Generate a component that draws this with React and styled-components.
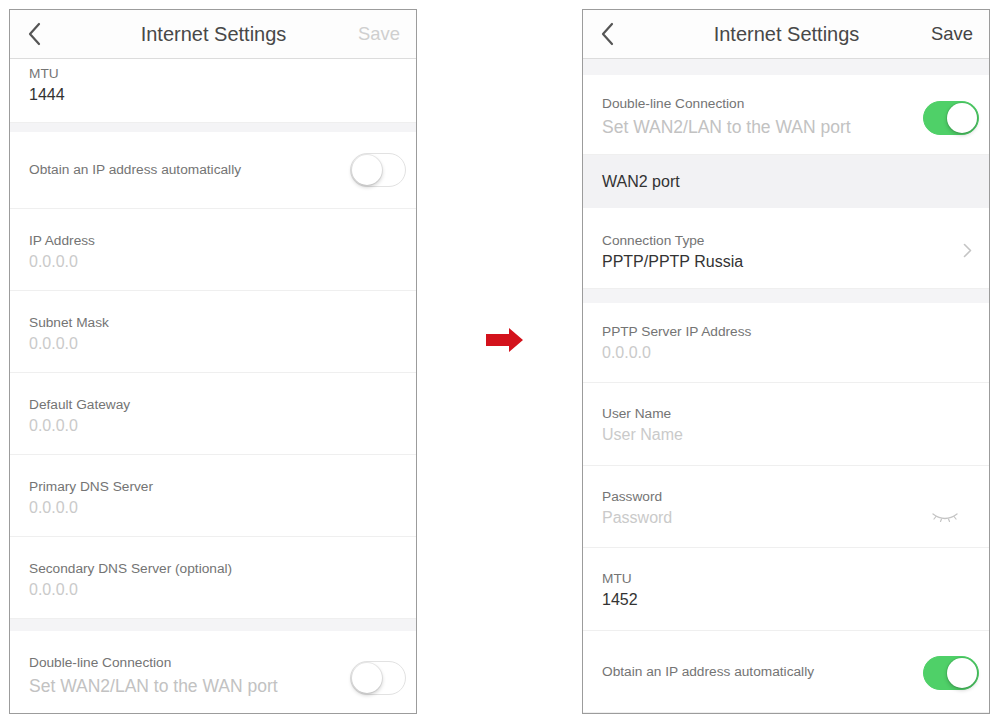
import styled, { createGlobalStyle } from "styled-components"

const GlobalStyle = createGlobalStyle`
body{
margin:0;
background:#fff;
font-family:"Liberation Sans", Arial, sans-serif;
}
`

const Page = styled.div`
display:flex;
align-items:flex-start;
padding:9px 0 0 9px;
`
const Phone = styled.div`
width:408px;
height:705px;
box-sizing:border-box;
border:1px solid #9c9c9c;
overflow:hidden;
background:#fff;
display:flex;
flex-direction:column;
`
const Header = styled.div`
flex:none;
height:48px;
display:grid;
grid-template-columns:1fr auto 1fr;
align-items:center;
padding:0 16px 0 17px;
border-bottom:1px solid #dcdcdc;
background:#fdfdfd;
`
const Title = styled.div`
font-size:20px;
color:#484848;
`
const Save = styled.div`
justify-self:end;
font-size:18.4px;
color:${p => (p.$active ? "#444" : "#cfcfcf")};
`
const Back = styled.svg`
display:block;
`
const Row = styled.div`
flex:none;
height:${p => p.$h}px;
box-sizing:border-box;
padding:${p => p.$pad || 0}px ${p => p.$right || 17}px 0 19px;
border-bottom:1px solid #efefef;
display:flex;
align-items:${p => (p.$center ? "center" : "flex-start")};
justify-content:space-between;
`
const Field = styled.div`
display:flex;
flex-direction:column;
`
const Label = styled.div`
font-size:13.7px;
line-height:18px;
color:#747474;
`
const Value = styled.div`
font-size:16px;
line-height:24px;
color:${p => (p.$muted ? "#cacaca" : "#333")};
font-weight:${p => (p.$bold ? 500 : 400)};
`
const Sub = styled.div`
font-size:17.5px;
line-height:24px;
margin-top:2px;
color:#c2c2c2;
`
const Band = styled.div`
flex:none;
height:${p => p.$h}px;
background:#f4f4f6;
`
const Section = styled.div`
flex:none;
height:53px;
display:flex;
align-items:center;
padding-left:19px;
background:#f2f2f4;
font-size:16px;
color:#333;
`
const Aside = styled.div`
align-self:${p => p.$self || "center"};
margin:${p => p.$m || "0"};
display:flex;
`
const Track = styled.div`
flex:none;
width:56px;
height:34px;
border-radius:17px;
box-sizing:border-box;
padding:0 1px;
background:${p => (p.$on ? "#4fd068" : "#fff")};
border:1px solid ${p => (p.$on ? "#4fd068" : "#e2e2e2")};
display:flex;
align-items:center;
justify-content:${p => (p.$on ? "flex-end" : "flex-start")};
margin-top:${p => p.$dy || 0}px;
`
const Knob = styled.div`
width:30px;
height:30px;
border-radius:50%;
background:#fff;
box-shadow:0 2px 4px rgba(0,0,0,.22), 0 0 0 1px rgba(0,0,0,.07);
`
const Gap = styled.div`
flex:none;
width:165px;
box-sizing:border-box;
padding:319px 0 0 69px;
`

const Toggle = ({ on, dy }) => (
  <Track $on={on} $dy={dy}>
    <Knob />
  </Track>
)

const PhoneHeader = ({ active }) => (
  <Header>
    <Back width="14" height="24" viewBox="0 0 14 24">
      <path d="M12 2 L3 12 L12 22" fill="none" stroke="#555" strokeWidth="2.2" strokeLinecap="round" strokeLinejoin="round" />
    </Back>
    <Title>Internet Settings</Title>
    <Save $active={active}>Save</Save>
  </Header>
)

const Info = ({ label, value, muted, bold }) => (
  <Field>
    <Label>{label}</Label>
    <Value $muted={muted} $bold={bold}>{value}</Value>
  </Field>
)

const App = () => {
  return (
    <Page>
      <GlobalStyle />
      <Phone>
        <PhoneHeader />
        <Row $h={64} $pad={6}>
          <Info label="MTU" value="1444" />
        </Row>
        <Band $h={9} />
        <Row $h={77} $center $right={10}>
          <Label>Obtain an IP address automatically</Label>
          <Toggle />
        </Row>
        <Row $h={82} $pad={23}>
          <Info label="IP Address" value="0.0.0.0" muted />
        </Row>
        <Row $h={82} $pad={23}>
          <Info label="Subnet Mask" value="0.0.0.0" muted />
        </Row>
        <Row $h={82} $pad={23}>
          <Info label="Default Gateway" value="0.0.0.0" muted />
        </Row>
        <Row $h={82} $pad={23}>
          <Info label="Primary DNS Server" value="0.0.0.0" muted />
        </Row>
        <Row $h={82} $pad={23}>
          <Info label="Secondary DNS Server (optional)" value="0.0.0.0" muted />
        </Row>
        <Band $h={12} />
        <Row $h={94} $pad={23} $right={10}>
          <Field>
            <Label>Double-line Connection</Label>
            <Sub>Set WAN2/LAN to the WAN port</Sub>
          </Field>
          <Toggle dy={7} />
        </Row>
      </Phone>

      <Gap>
        <svg width="37" height="24" viewBox="0 0 37 24">
          <path d="M0 6 H23 V0 L37 12 L23 24 V18 H0 Z" fill="#d3121c" />
        </svg>
      </Gap>

      <Phone>
        <PhoneHeader active />
        <Band $h={16} />
        <Row $h={80} $pad={20} $right={10}>
          <Field>
            <Label>Double-line Connection</Label>
            <Sub>Set WAN2/LAN to the WAN port</Sub>
          </Field>
          <Toggle on dy={6} />
        </Row>
        <Section>WAN2 port</Section>
        <Row $h={81} $pad={24}>
          <Info label="Connection Type" value="PPTP/PPTP Russia" bold />
          <Aside $self="flex-start" $m="11px 0 0 0">
            <svg width="9" height="15" viewBox="0 0 9 15">
              <path d="M1.5 1.5 L7.5 7.5 L1.5 13.5" fill="none" stroke="#c4c4c4" strokeWidth="1.6" strokeLinecap="round" strokeLinejoin="round" />
            </svg>
          </Aside>
        </Row>
        <Band $h={14} />
        <Row $h={80} $pad={20}>
          <Info label="PPTP Server IP Address" value="0.0.0.0" muted />
        </Row>
        <Row $h={83} $pad={22}>
          <Info label="User Name" value="User Name" muted />
        </Row>
        <Row $h={82} $pad={22}>
          <Info label="Password" value="Password" muted />
          <Aside $self="flex-start" $m="24px 14px 0 0">
            <svg width="26" height="12" viewBox="0 0 26 12">
              <path d="M1 2 Q13 11 25 2" fill="none" stroke="#c4c4c4" strokeWidth="1.3" strokeLinecap="round" />
              <path d="M4 4.5 L2 7 M9.5 7 L8.5 9.5 M16.5 7 L17.5 9.5 M22 4.5 L24 7" fill="none" stroke="#c4c4c4" strokeWidth="1.2" strokeLinecap="round" />
            </svg>
          </Aside>
        </Row>
        <Row $h={83} $pad={22}>
          <Info label="MTU" value="1452" />
        </Row>
        <Row $h={82} $center $right={10}>
          <Label>Obtain an IP address automatically</Label>
          <Toggle on dy={2} />
        </Row>
      </Phone>
    </Page>
  )
}

export default App
